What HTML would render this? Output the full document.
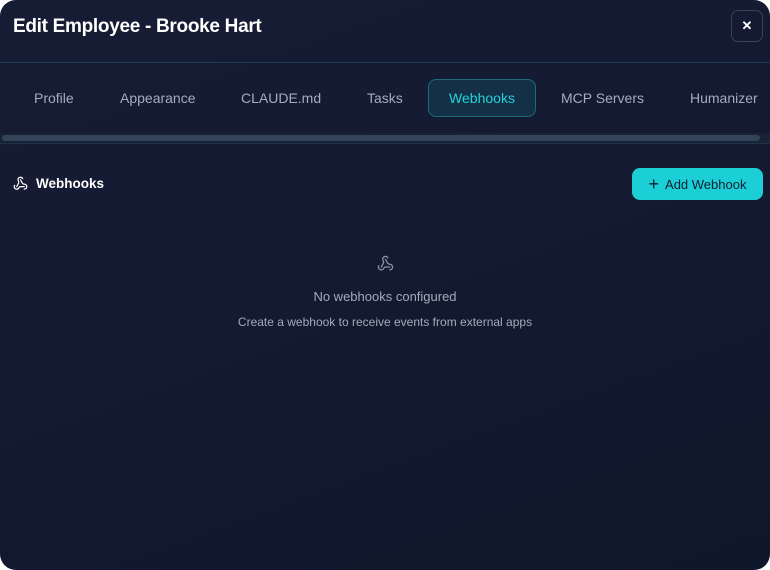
<!DOCTYPE html>
<html><head><meta charset="utf-8"><style>
*{box-sizing:border-box;margin:0;padding:0}
html,body{width:770px;height:570px;background:#fff;overflow:hidden}
.m{position:absolute;left:0;top:0;width:770px;height:570px;border-radius:16px;background:linear-gradient(160deg,#161c34 0%,#131a31 50%,#0f172a 100%);font-family:"Liberation Sans",sans-serif;overflow:hidden}
h1{position:absolute;left:13px;top:16px;font-size:19px;font-weight:bold;color:#fff;letter-spacing:-0.3px}
.x{position:absolute;left:731px;top:10px;width:32px;height:32px;border:1px solid #3a4254;border-radius:7px;color:#fff;font-size:13px;font-weight:bold;text-align:center;line-height:30px}
.l1{position:absolute;left:0;top:62px;width:770px;height:1px;background:#1d3a4e}
.tab{position:absolute;top:80px;height:36px;line-height:36px;font-size:14px;color:#a4adbd}
.act{left:428px;width:108px;border:1px solid #1a6c78;border-radius:8px;background:#133046;color:#22d3dc;text-align:center;top:79px;height:38px;line-height:36px}
.sb{position:absolute;left:0;top:133px;width:770px;height:10px;background:#1a2235}
.sb i{position:absolute;left:2px;top:2px;height:6px;border-radius:3px;background:#334359;width:758px}
.l2{position:absolute;left:0;top:143px;width:770px;height:1px;background:#1d3346}
.hd{position:absolute;left:13px;top:176px;display:flex;align-items:center;gap:8px;color:#fff;font-weight:bold;font-size:13.5px}
.btn{position:absolute;left:632px;top:168px;width:131px;height:32px;border-radius:8px;background:#1ccfd6;color:#0d2033;font-size:13px;display:flex;align-items:center;justify-content:center;gap:6px}
.c{position:absolute;left:0;width:770px;text-align:center;color:#a3abba}
</style></head><body><div class="m">
<h1>Edit Employee - Brooke Hart</h1>
<div class="x">✕</div>
<div class="l1"></div>
<div class="tab" style="left:34px">Profile</div>
<div class="tab" style="left:120px">Appearance</div>
<div class="tab" style="left:241px">CLAUDE.md</div>
<div class="tab" style="left:367px">Tasks</div>
<div class="tab act">Webhooks</div>
<div class="tab" style="left:561px">MCP Servers</div>
<div class="tab" style="left:690px">Humanizer</div>
<div class="sb"><i></i></div>
<div class="l2"></div>
<div class="hd"><svg width="15" height="15" viewBox="0 0 24 24" fill="none" stroke="#fff" stroke-width="2" stroke-linecap="round" stroke-linejoin="round"><path d="M18 16.98h-5.99c-1.1 0-1.95.94-2.48 1.9A4 4 0 0 1 2 17c.01-.7.2-1.4.57-2"/><path d="m6 17 3.13-5.78c.53-.97.1-2.18-.5-3.1a4 4 0 1 1 6.89-4.06"/><path d="m12 6 3.13 5.73C15.66 12.7 16.9 13 18 13a4 4 0 0 1 0 8"/></svg>Webhooks</div>
<div class="btn"><span style="font-size:18px;line-height:16px">+</span>Add Webhook</div>
<div class="c" style="top:255px"><svg width="17" height="17" viewBox="0 0 24 24" fill="none" stroke="#8a93a4" stroke-width="1.8" stroke-linecap="round" stroke-linejoin="round"><path d="M18 16.98h-5.99c-1.1 0-1.95.94-2.48 1.9A4 4 0 0 1 2 17c.01-.7.2-1.4.57-2"/><path d="m6 17 3.13-5.78c.53-.97.1-2.18-.5-3.1a4 4 0 1 1 6.89-4.06"/><path d="m12 6 3.13 5.73C15.66 12.7 16.9 13 18 13a4 4 0 0 1 0 8"/></svg></div>
<div class="c" style="top:289px;font-size:13px">No webhooks configured</div>
<div class="c" style="top:315px;font-size:12px">Create a webhook to receive events from external apps</div>
</div></body></html>
